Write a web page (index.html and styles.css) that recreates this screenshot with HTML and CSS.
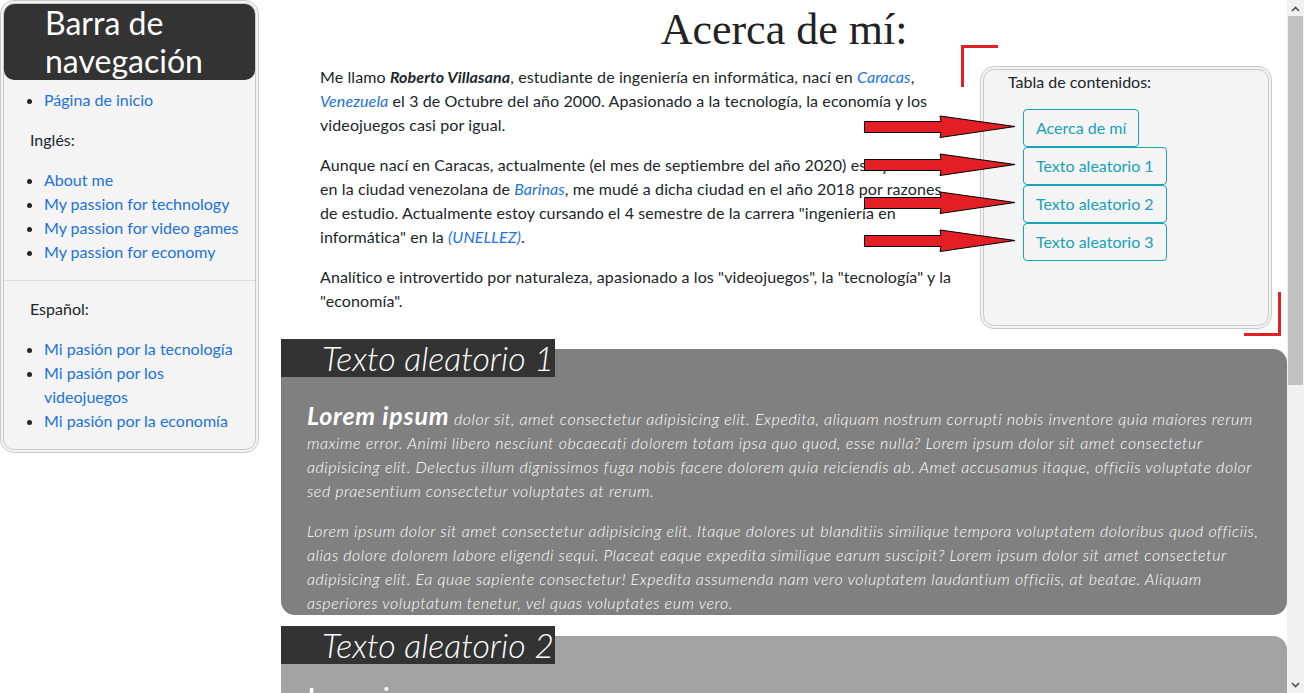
FILE: index.html
```html
<!DOCTYPE html>
<html lang="es">
<head>
<meta charset="utf-8">
<title>Acerca de mí</title>
<link rel="stylesheet" href="styles.css">
</head>
<body>
<div class="page">
  <aside class="sidebar">
    <h2 class="nav-title">Barra de navegación</h2>
    <ul class="nav-list nav-home">
      <li><a href="#">Página de inicio</a></li>
    </ul>
    <p class="nav-label">Inglés:</p>
    <ul class="nav-list">
      <li><a href="#">About me</a></li>
      <li><a href="#">My passion for technology</a></li>
      <li><a href="#">My passion for video games</a></li>
      <li><a href="#">My passion for economy</a></li>
    </ul>
    <hr class="nav-sep">
    <p class="nav-label nav-label-es">Español:</p>
    <ul class="nav-list nav-last">
      <li><a href="#">Mi pasión por la tecnología</a></li>
      <li><a href="#">Mi pasión por los videojuegos</a></li>
      <li><a href="#">Mi pasión por la economía</a></li>
    </ul>
  </aside>

  <main class="main">
    <h1 class="title">Acerca de mí:</h1>
    <section class="about">
      <div class="about-text">
        <p>Me llamo <b><i>Roberto Villasana</i></b>, estudiante de ingeniería en informática, nací en <a href="#"><i>Caracas</i></a>, <a href="#"><i>Venezuela</i></a> el 3 de Octubre del año 2000. Apasionado a la tecnología, la economía y los videojuegos casi por igual.</p>
        <p>Aunque nací en Caracas, actualmente (el mes de septiembre del año 2020) estoy viviendo en la ciudad venezolana de <a href="#"><i>Barinas</i></a>, me mudé a dicha ciudad en el año 2018 por razones de estudio. Actualmente estoy cursando el 4 semestre de la carrera "ingeniería en informática" en la <a href="#"><i>(UNELLEZ)</i></a>.</p>
        <p>Analítico e introvertido por naturaleza, apasionado a los "videojuegos", la "tecnología" y la "economía".</p>
      </div>
      <nav class="toc">
        <p class="toc-title">Tabla de contenidos:</p>
        <div class="toc-buttons">
          <a class="toc-btn" href="#">Acerca de mí<svg class="arrow" viewBox="0 0 152 24" aria-hidden="true"><polygon points="0.5,6.5 77,6.5 76,1 151,11.5 76,22.5 77,17.5 0.5,17.5" fill="#e31e24" stroke="#000" stroke-width="1"/></svg></a>
          <a class="toc-btn" href="#">Texto aleatorio 1<svg class="arrow" viewBox="0 0 152 24" aria-hidden="true"><polygon points="0.5,6.5 77,6.5 76,1 151,11.5 76,22.5 77,17.5 0.5,17.5" fill="#e31e24" stroke="#000" stroke-width="1"/></svg></a>
          <a class="toc-btn" href="#">Texto aleatorio 2<svg class="arrow" viewBox="0 0 152 24" aria-hidden="true"><polygon points="0.5,6.5 77,6.5 76,1 151,11.5 76,22.5 77,17.5 0.5,17.5" fill="#e31e24" stroke="#000" stroke-width="1"/></svg></a>
          <a class="toc-btn" href="#">Texto aleatorio 3<svg class="arrow" viewBox="0 0 152 24" aria-hidden="true"><polygon points="0.5,6.5 77,6.5 76,1 151,11.5 76,22.5 77,17.5 0.5,17.5" fill="#e31e24" stroke="#000" stroke-width="1"/></svg></a>
        </div>
      </nav>
    </section>

    <section class="card">
      <h2 class="card-title">Texto aleatorio 1</h2>
      <div class="card-body">
        <p><strong>Lorem ipsum</strong> dolor sit, amet consectetur adipisicing elit. Expedita, aliquam nostrum corrupti nobis inventore quia maiores rerum maxime error. Animi libero nesciunt obcaecati dolorem totam ipsa quo quod, esse nulla? Lorem ipsum dolor sit amet consectetur adipisicing elit. Delectus illum dignissimos fuga nobis facere dolorem quia reiciendis ab. Amet accusamus itaque, officiis voluptate dolor sed praesentium consectetur voluptates at rerum.</p>
        <p>Lorem ipsum dolor sit amet consectetur adipisicing elit. Itaque dolores ut blanditiis similique tempora voluptatem doloribus quod officiis, alias dolore dolorem labore eligendi sequi. Placeat eaque expedita similique earum suscipit? Lorem ipsum dolor sit amet consectetur adipisicing elit. Ea quae sapiente consectetur! Expedita assumenda nam vero voluptatem laudantium officiis, at beatae. Aliquam asperiores voluptatum tenetur, vel quas voluptates eum vero.</p>
      </div>
    </section>

    <section class="card card-light">
      <h2 class="card-title">Texto aleatorio 2</h2>
      <div class="card-body">
        <p><strong>Lorem ipsum</strong> dolor sit, amet consectetur adipisicing elit. Expedita, aliquam nostrum corrupti nobis inventore quia maiores rerum maxime error. Animi libero nesciunt obcaecati dolorem totam ipsa quo quod, esse nulla?</p>
      </div>
    </section>
  </main>
</div>

<div class="scrollbar" aria-hidden="true">
  <div class="sb-btn"><svg width="9" height="6" viewBox="0 0 9 6"><path d="M1 5 L4.5 1.5 L8 5" fill="none" stroke="#505050" stroke-width="1.6"/></svg></div>
  <div class="sb-thumb"></div>
  <div class="sb-space"></div>
  <div class="sb-btn"><svg width="9" height="6" viewBox="0 0 9 6"><path d="M1 1 L4.5 4.5 L8 1" fill="none" stroke="#505050" stroke-width="1.6"/></svg></div>
</div>
</body>
</html>
```
FILE: styles.css
```css
html, body {
  margin: 0;
  height: 100%;
  overflow: hidden;
}
body {
  font-family: Lato, "Noto Sans", sans-serif;
  font-size: 16px;
  line-height: 1.5;
  color: #212529;
  background: #fff;
}
a {
  color: #1b72e0;
  text-decoration: none;
}
.page {
  display: grid;
  grid-template-columns: 259px 1fr;
  column-gap: 22px;
  align-items: start;
  margin-right: 17px;
}

/* Sidebar */
.sidebar {
  box-sizing: border-box;
  border: 4px double #c8c8c8;
  border-radius: 14px;
  background: #f4f4f4;
  padding-bottom: 16px;
}
.nav-title {
  margin: 0;
  background: #333;
  color: #fff;
  font-size: 32px;
  font-weight: 400;
  line-height: 38px;
  padding-left: 41px;
  border-radius: 10px;
}
.nav-list {
  margin: 0 0 16px;
  padding: 0 14px 0 40px;
}
.nav-home {
  margin-top: 8px;
}
.nav-last {
  margin-bottom: 0;
}
.nav-label {
  margin: 0 0 16px;
  padding-left: 26px;
}
.nav-label-es {
  margin-top: 16px;
}
.nav-sep {
  margin: 0;
  border: 0;
  border-top: 1px solid #dcdcdc;
}

/* Main */
.main {
  min-width: 0;
}
.title {
  margin: 0 0 5px;
  font-family: "Liberation Serif", serif;
  font-size: 44px;
  font-weight: 400;
  line-height: 60px;
  text-align: center;
  color: #222;
}
.about {
  display: flex;
  justify-content: space-between;
  align-items: flex-start;
  padding: 0 15px 0 39px;
}
.about-text {
  flex: 0 0 638px;
  letter-spacing: 0.1px;
}
.about-text p {
  margin: 0 0 16px;
}
.toc {
  position: relative;
  box-sizing: border-box;
  width: 292px;
  height: 263px;
  margin-top: 1px;
  border: 4px double #c8c8c8;
  border-radius: 14px;
  background: #f4f4f4;
  padding-left: 24px;
}
.toc::before,
.toc::after {
  content: "";
  position: absolute;
  border: 0 solid #e31e24;
}
.toc::before {
  left: -23px;
  top: -25px;
  width: 34px;
  height: 39px;
  border-top-width: 3px;
  border-left-width: 3px;
}
.toc::after {
  right: -13px;
  bottom: -11px;
  width: 34px;
  height: 41px;
  border-right-width: 3px;
  border-bottom-width: 3px;
}
.toc-title {
  margin: 0;
}
.toc-buttons {
  display: flex;
  flex-direction: column;
  align-items: flex-start;
  margin-top: 15px;
  padding-left: 15px;
}
.toc-btn {
  position: relative;
  display: block;
  border: 1px solid #17a2b8;
  border-radius: 4px;
  padding: 6px 12px;
  line-height: 24px;
  color: #17a2b8;
}
.arrow {
  position: absolute;
  right: calc(100% + 8px);
  top: 50%;
  width: 152px;
  height: 24px;
  margin-top: -13px;
}

/* Cards */
.card {
  display: flow-root;
  margin-top: 20px;
  background: #808080;
  border-radius: 14px;
  color: #fff;
}
.card-light {
  margin-top: 21px;
  background: #a3a3a3;
}
.card-title {
  width: fit-content;
  margin: -10px 0 0;
  padding: 0 1px 0 41px;
  background: #333;
  color: #fff;
  font-size: 34px;
  font-style: italic;
  font-weight: 300;
  line-height: 38px;
}
.card-body {
  padding: 26px 26px 0;
  font-size: 16px;
  font-style: italic;
  font-weight: 300;
  letter-spacing: 0.55px;
  line-height: 24px;
}
.card-light .card-body {
  padding-top: 20px;
}
.card-body p {
  margin: 0 0 16px;
}
.card-body p:last-child {
  margin-bottom: 0;
}
.card-body strong {
  font-size: 25px;
  font-weight: 700;
  letter-spacing: 0.8px;
}

/* Scrollbar imitation */
.scrollbar {
  position: fixed;
  top: 0;
  right: 0;
  bottom: 0;
  width: 17px;
  background: #f1f1f1;
  display: flex;
  flex-direction: column;
}
.sb-btn {
  height: 17px;
  display: flex;
  align-items: center;
  justify-content: center;
}
.sb-thumb {
  height: 369px;
  margin: -1px 1px 0;
  background: #c1c1c1;
}
.sb-space {
  flex: 1;
}
```
